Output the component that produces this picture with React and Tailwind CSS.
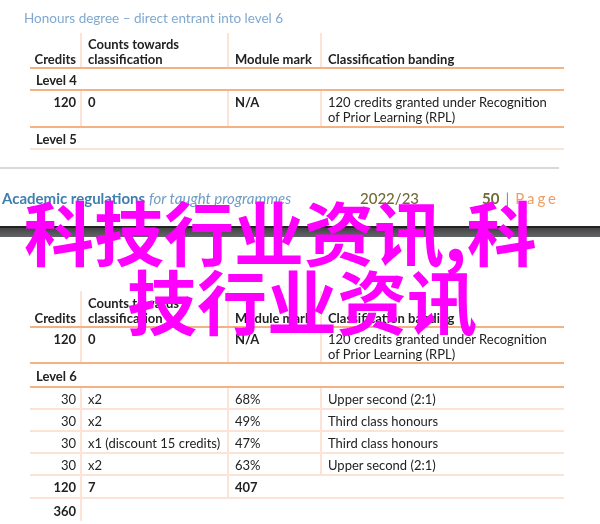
function Row({ cells, h, border = 'border-b-2 border-[#f4b183]', lines = [true, true, true], align = 'items-center pt-0.5', head }) {
  const place = head ? 'items-end' : align;
  return (
    <div className={`ml-[30px] grid w-[534px] grid-cols-[52px_147px_93px_242px] ${border}`} style={{ height: h }}>
      <div className={`flex justify-end ${place} pr-1 border-r-2 border-[#fbe3d5]`}>{cells[0]}</div>
      <div className={`flex ${place} pl-1.5 ${lines[0] ? 'border-r-2 border-[#fbe3d5]' : ''}`}>{cells[1]}</div>
      <div className={`flex ${place} pl-1.5 ${lines[1] ? 'border-r-2 border-[#fbe3d5]' : ''}`}>{cells[2]}</div>
      <div className={`flex ${place} pl-1.5`}>{cells[3]}</div>
    </div>
  );
}

function LevelRow({ label, h, border }) {
  return (
    <div className={`ml-[30px] flex w-[534px] items-center pl-1.5 pt-0.5 font-bold ${border}`} style={{ height: h }}>
      {label}
    </div>
  );
}

const b = (t) => <span className="font-bold">{t}</span>;
const rpl = (
  <span className="leading-[15px]">120 credits granted under Recognition<br />of Prior Learning (RPL)</span>
);

function Head({ h }) {
  return (
    <Row
      h={h}
      head
      cells={[
        b('Credits'),
        <span className="font-bold leading-[15px]">Counts towards<br />classification</span>,
        b('Module mark'),
        b('Classification banding'),
      ]}
    />
  );
}

const soft = 'border-b-2 border-[#fbe3d5]';
const strong = 'border-b-2 border-[#f4b183]';

export default function App() {
  return (
    <div className="relative h-[524px] w-[600px] overflow-hidden bg-white font-['Lato','Liberation_Sans',sans-serif] text-[13px] leading-[15px] text-[#222]">
      <div className="blur-[0.3px]">
        <p className="ml-6 flex h-[33px] items-start pt-[11px] text-[13.5px] text-[#7fa9cf]">Honours degree – direct entrant into level 6</p>
        <Head h={36} />
        <LevelRow label="Level 4" h={22} border={strong} />
        <Row h={37} border={strong} align="items-start pt-1" cells={[b('120'), b('0'), b('N/A'), rpl]} />
        <LevelRow label="Level 5" h={22} border={soft} />

        <div className="mt-[17px] h-0.5 w-[559px] bg-[#d9d9d9]" />

        <div className="flex h-[57px] items-start pt-[22px] text-[15px]">
          <span className="ml-0.5 w-[358px] text-[#6f9cc2]">
            <span className="font-bold text-[#3f7fae]">Academic regulations</span> <em>for taught programmes</em>
          </span>
          <span className="w-[122px] font-medium text-[#6f6b35]">2022/23</span>
          <span className="font-bold text-[#6f6b35]">50</span>
          <span className="mx-1.5 text-[#888]">|</span>
          <span className="tracking-[3px] text-[#ee9d67]">Page</span>
        </div>

        <div className="h-[11px] border-t-2 border-[#222] bg-gradient-to-b from-[#444] to-[#62666a]" />

        <div className="mt-[54px]">
          <Head h={37} />
        </div>
        <Row h={36} border={strong} align="items-start pt-1" cells={[b('120'), b('0'), b('N/A'), rpl]} />
        <LevelRow label="Level 6" h={24} border={strong} />
        <Row h={22} border={soft} cells={['30', 'x2', '68%', 'Upper second (2:1)']} />
        <Row h={22} border={soft} cells={['30', 'x2', '49%', 'Third class honours']} />
        <Row h={22} border={soft} cells={['30', 'x1 (discount 15 credits)', '47%', 'Third class honours']} />
        <Row h={22} border={soft} cells={['30', 'x2', '63%', 'Upper second (2:1)']} />
        <Row h={23} border={soft} lines={[true, false, false]} cells={[b('120'), b('7'), b('407'), '']} />
        <Row h={22} border="" lines={[false, false, false]} cells={[b('360'), '', '', '']} />
      </div>

      {/* watermark title over the document */}
      <div className="pointer-events-none absolute left-0 top-[196px] w-full font-['Noto_Sans_CJK_SC',sans-serif] text-[70px] font-bold leading-[69px] text-[#ff00ff]">
        <div className="ml-6 whitespace-nowrap">科技行业资讯,科</div>
        <div className="ml-[127px] whitespace-nowrap">技行业资讯</div>
      </div>
    </div>
  );
}
